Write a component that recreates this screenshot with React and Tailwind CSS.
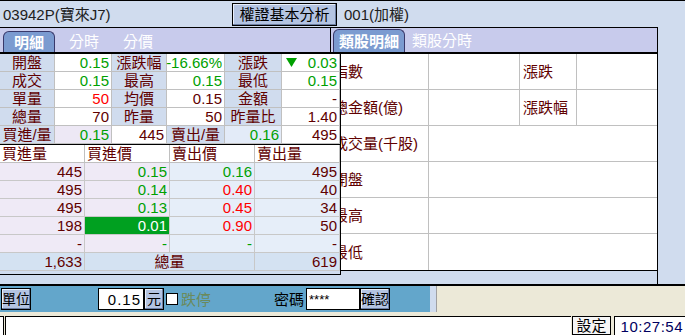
import React from 'react';

const summary = [
    [
        { t: '開盤', k: 'l' },
        { t: '0.15', c: 'text-[#00a000]' },
        { t: '漲跌幅', k: 'l' },
        { t: '-16.66%', c: 'text-[#00a000]' },
        { t: '漲跌', k: 'l' },
        { t: '0.03', c: 'text-[#00a000]', down: true },
    ],
    [
        { t: '成交', k: 'l' },
        { t: '0.15', c: 'text-[#00a000]' },
        { t: '最高', k: 'l' },
        { t: '0.15', c: 'text-[#00a000]' },
        { t: '最低', k: 'l' },
        { t: '0.15', c: 'text-[#00a000]' },
    ],
    [
        { t: '單量', k: 'l' },
        { t: '50', c: 'text-[#ff0000]' },
        { t: '均價', k: 'l' },
        { t: '0.15' },
        { t: '金額', k: 'l' },
        { t: '-' },
    ],
    [
        { t: '總量', k: 'l' },
        { t: '70' },
        { t: '昨量', k: 'l' },
        { t: '50' },
        { t: '昨量比', k: 'l' },
        { t: '1.40' },
    ],
    [
        { t: '買進/量', k: 'l' },
        { t: '0.15', c: 'text-[#00a000]', bg: 'bg-[#ede8f5]' },
        { t: '445' },
        { t: '賣出/量', k: 'l' },
        { t: '0.16', c: 'text-[#00a000]', bg: 'bg-[#e3ebf8]' },
        { t: '495' },
    ],
];

const book = [
    ['445', '0.15', '0.16', '495'],
    ['495', '0.14', '0.40', '40'],
    ['495', '0.13', '0.45', '34'],
    ['198', '0.01', '0.90', '50'],
    ['-', '-', '-', '-'],
];

const sellColor = (v) => (v === '0.16' || v === '-' ? 'text-[#00a000]' : 'text-[#ff0000]');

const rightRows = [
    ['指數', '漲跌'],
    ['總金額(億)', '漲跌幅'],
    ['成交量(千股)'],
    ['開盤'],
    ['最高'],
    ['最低'],
];

const Btn = ({ children, className = '' }) => (
    <div
        className={`flex items-center justify-center whitespace-nowrap border border-black bg-[#b4c4e2] shadow-[inset_-1px_-1px_0_#6d7fa3,inset_1px_1px_0_#e8eefa] text-black ${className}`}
    >
        {children}
    </div>
);

const App = () => {
    return (
        <div
            className="w-[685px] h-[335px] overflow-hidden bg-[#d0dcee] border-t border-black flex flex-col text-[15px] leading-none text-[#600000]"
            style={{ fontFamily: '"Liberation Sans", "Noto Sans CJK TC", sans-serif' }}
        >
            {/* header */}
            <div className="h-[26px] flex items-center text-[#202020]">
                <span className="pl-[3px] w-[232px]">03942P(寶來J7)</span>
                <Btn className="w-[105px] h-[23px]">權證基本分析</Btn>
                <span className="ml-[7px]">001(加權)</span>
            </div>

            {/* middle */}
            <div className="h-[257px] flex">
                {/* left panel */}
                <div className="w-[341px] relative z-10 flex flex-col">
                    <div className="w-[331px] h-[27px] border-t border-r border-b-2 border-black bg-[#c8cbec] flex items-end pl-[3px] text-white">
                        <div className="w-[52px] h-[21px] rounded-t-[6px] border border-b-0 border-[#38386a] bg-[#7b9bd0] font-bold flex items-center justify-center">
                            明細
                        </div>
                        <div className="ml-[14px] h-[21px] flex items-center">分時</div>
                        <div className="ml-[24px] h-[21px] flex items-center">分價</div>
                    </div>
                    <div className="w-[341px] h-[221px] border-r border-b border-black bg-[#d0dcee]">
                        <div className="grid grid-cols-[55px_57px_55px_58px_57px_58px] auto-rows-[18px]">
                            {summary.flat().map((c, i) => (
                                <div
                                    key={i}
                                    className={`border-r border-b border-[#c0c0c0] flex items-center whitespace-nowrap ${
                                        c.k === 'l'
                                            ? 'bg-[#d0dcee] justify-center'
                                            : `${c.bg || 'bg-white'} justify-end pr-[2px] ${c.c || 'text-[#600000]'}`
                                    }`}
                                >
                                    {c.down && (
                                        <svg width="11" height="9" viewBox="0 0 11 9" className="mr-auto ml-[4px]">
                                            <polygon points="0,0 11,0 5.5,9" fill="#00a000" />
                                        </svg>
                                    )}
                                    {c.t}
                                </div>
                            ))}
                        </div>
                        <div className="h-px bg-black" />
                        <div className="grid grid-cols-4 auto-rows-[18px]">
                            {['買進量', '買進價', '賣出價', '賣出量'].map((h) => (
                                <div key={h} className="bg-white border-r border-b border-[#c0c0c0] flex items-center pl-[2px]">
                                    {h}
                                </div>
                            ))}
                            {book.map((r, i) => (
                                <React.Fragment key={i}>
                                    <div className="bg-[#efeaf6] border-r border-b border-[#c8c8c8] flex items-center justify-end pr-[2px]">
                                        {r[0]}
                                    </div>
                                    <div
                                        className={`border-r border-b border-[#c8c8c8] flex items-center justify-end pr-[2px] ${
                                            r[1] === '0.01' ? 'bg-[#00a020] text-white' : 'bg-[#efeaf6] text-[#00a000]'
                                        }`}
                                    >
                                        {r[1]}
                                    </div>
                                    <div className={`bg-[#e6eef9] border-r border-b border-[#c8c8c8] flex items-center justify-end pr-[2px] ${sellColor(r[2])}`}>
                                        {r[2]}
                                    </div>
                                    <div className="bg-[#e6eef9] border-r border-b border-[#c8c8c8] flex items-center justify-end pr-[2px]">
                                        {r[3]}
                                    </div>
                                </React.Fragment>
                            ))}
                            <div className="bg-[#d4e2f2] border-r border-b border-[#c8c8c8] flex items-center justify-end pr-[2px]">1,633</div>
                            <div className="col-span-2 bg-[#d4e2f2] border-r border-b border-[#c8c8c8] flex items-center justify-center">總量</div>
                            <div className="bg-[#d4e2f2] border-r border-b border-[#c8c8c8] flex items-center justify-end pr-[2px]">619</div>
                        </div>
                    </div>
                </div>

                {/* right panel */}
                <div className="ml-[-10px] w-[327px] h-[257px] border-r border-black flex flex-col">
                    <div className="h-[27px] border-t border-b-2 border-black bg-[#c8cbec] flex items-end pl-[2px] text-white">
                        <div className="w-[72px] h-[23px] rounded-t-[6px] border border-b-0 border-[#38386a] bg-[#7b9bd0] font-bold flex items-center justify-center">
                            類股明細
                        </div>
                        <div className="ml-[7px] h-[23px] flex items-center">類股分時</div>
                    </div>
                    <div className="bg-white border-b border-black">
                        {rightRows.map((r, i) => (
                            <div key={i} className="h-[36px] flex border-b border-[#c0c0c0] last:border-b-0">
                                <div className="w-[98px] border-r border-[#c0c0c0] flex items-center pl-[2px]">{r[0]}</div>
                                {r.length > 1 ? (
                                    <>
                                        <div className="w-[91px] border-r border-[#c0c0c0]" />
                                        <div className="w-[57px] border-r border-[#c0c0c0] flex items-center pl-[3px]">{r[1]}</div>
                                        <div className="flex-1" />
                                    </>
                                ) : (
                                    <div className="flex-1" />
                                )}
                            </div>
                        ))}
                    </div>
                </div>
            </div>

            {/* toolbar */}
            <div className="h-[28px] border-t-2 border-black flex">
                <div className="w-[430px] bg-[#63a6cb] flex items-center text-black">
                    <Btn className="ml-[1px] w-[30px] h-[22px] text-[14px]">單位</Btn>
                    <div className="ml-[67px] w-[46px] h-[22px] bg-white border border-black flex items-center justify-end pr-[2px] tracking-[1px]">
                        0.15
                    </div>
                    <Btn className="w-[20px] h-[22px] text-[14px]">元</Btn>
                    <div className="ml-[2px] w-[12px] h-[12px] bg-white border border-black" />
                    <span className="ml-[3px] text-[#6b8a5c]">跌停</span>
                    <span className="ml-[63px]">密碼</span>
                    <div className="ml-[2px] w-[54px] h-[22px] bg-white border border-black flex items-center pl-[2px] text-[13px]">****</div>
                    <Btn className="w-[30px] h-[22px] text-[14px]">確認</Btn>
                </div>
                <div className="w-[7px] bg-[#d0dcee] border-r border-[#a0a0a0]" />
                <div className="flex-1 bg-[#ece9d8]" />
            </div>

            {/* status bar */}
            <div className="flex-1 bg-[#ece9d8] pt-[4px] flex text-black">
                <div className="w-[4px] border-t border-r border-black bg-white" />
                <div className="ml-[1px] w-[566px] border-t border-l border-black bg-white" />
                <div className="ml-[1px] w-[39px] border border-black bg-[#f6f6f6] flex items-center justify-center">設定</div>
                <div className="ml-[3px] flex-1 border-t border-l border-black bg-white flex items-center justify-end pr-[2px] text-[#000060] tracking-[0.5px]">
                    10:27:54
                </div>
            </div>
        </div>
    );
};

export default App;
